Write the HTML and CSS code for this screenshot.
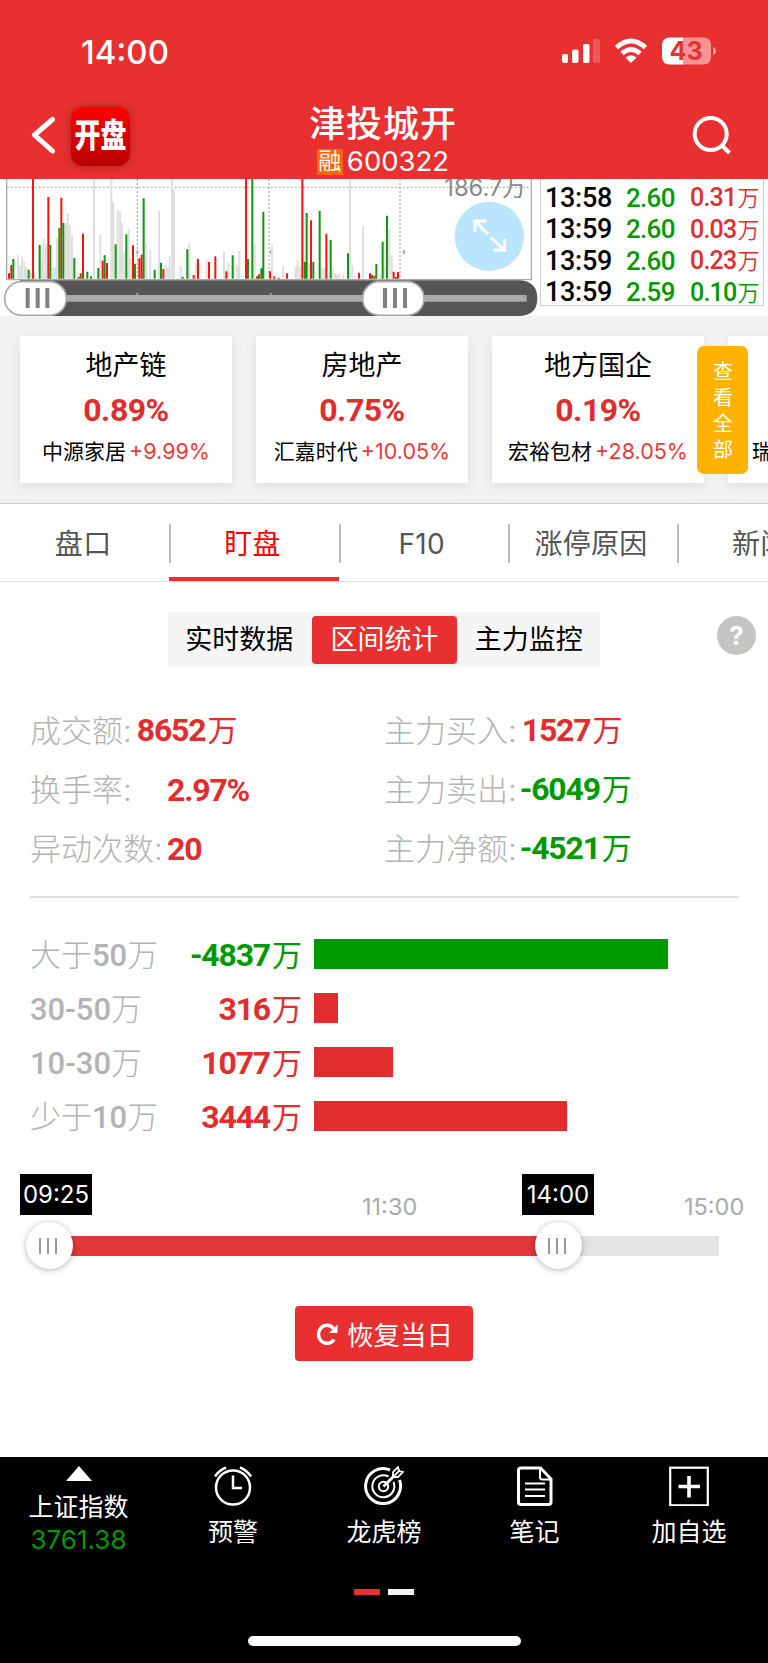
FILE: index.html
```html
<!DOCTYPE html>
<html lang="zh-CN">

<head>
  <meta charset="UTF-8">
  <meta name="viewport" content="width=device-width, initial-scale=1.0">
  <title>津投城开 600322</title>
  <link rel="stylesheet" href="styles.css">
</head>

<body>
  <div class="header">
    <div class="status-bar">
      <span class="clock">14:00</span>
      <svg class="status-icons" width="156" height="30" viewBox="0 0 156 30">
        <g fill="#fff">
          <rect x="2" y="18" width="6" height="9" rx="2" />
          <rect x="12" y="13.5" width="6.5" height="13.5" rx="2" />
          <rect x="23" y="8" width="6.5" height="19" rx="2" />
          <rect x="33" y="3" width="7" height="24" rx="2" opacity=".2" />
        </g>
        <g fill="none" stroke="#fff" stroke-width="5">
          <path d="M56.5 11.5Q71 -1.5 85.500 11.5" />
          <path d="M62 17.500Q71 9.500 80 17.500" />
        </g>
        <path d="M65.500 21.500Q71 17 76.500 21.500L71 27Z" fill="#fff" />
        <path d="M110 1.500H123V28.500H110Q102 28.500 102 20.500V9.500Q102 1.500 110 1.500Z" fill="#fff" />
        <path d="M123 1.500H143Q151 1.500 151 9.500V20.500Q151 28.500 143 28.500H123Z" fill="#f59696" />
        <path d="M153 11Q156 12 156 15T153 19Z" fill="#f59696" />
        <text class="battery-text" x="126" y="24" text-anchor="middle">43</text>
      </svg>
    </div>
    <div class="title-bar">
      <svg class="back" width="24" height="40" viewBox="0 0 24 40">
        <path d="M21.500 4.500L3.500 20L21.500 36" fill="none" stroke="#fff" stroke-width="5" stroke-linecap="round" stroke-linejoin="round" />
      </svg>
      <div class="app-icon"><span>开盘</span></div>
      <div class="stock">
        <h1>津投城开</h1>
        <div class="stock-code"><span class="margin-tag">融</span>600322</div>
      </div>
      <svg class="search" width="42" height="42" viewBox="0 0 42 42">
        <g fill="none" stroke="#fff" stroke-width="4">
          <circle cx="19.700" cy="19" r="16" />
          <path d="M31 30.500L38.500 38" />
        </g>
      </svg>
    </div>
  </div>

  <div class="quote">
    <!-- viewBox is three units to the pixel -->
    <svg class="chart" width="540" height="137" viewBox="0 12 1620 411">
      <g fill="none" stroke="#999" stroke-width="3" stroke-dasharray="6 6">
        <path d="M20 37H1590" />
        <path d="M412 12V313M807 12V313M1200 12V313" />
      </g>
      <path d="M412 226V238M812 226V238M1212 226V238" stroke="#aaa" stroke-width="6" />
      <path class="vol gray" d="M54 311V239M60 311V270M66 311V247M73 311V260M79 311V276M93 311V292M105 311V300M125 311V250M131 311V192M138 311V208M158 311V277M165 311V277M171 311V187M197 311V144M203 311V114M209 311V150M216 311V180M282 311V12M301 311V179M334 311V12M340 311V80M353 311V106M360 311V112M366 311V143M373 311V233M386 311V162M392 311V250M438 311V205M451 311V225M477 311V108M496 311V270M503 311V277M509 311V244M516 311V12M522 311V42M542 311V273M568 311V204M588 311V262M620 311V254M672 311V229M685 311V262M712 311V271M718 311V228M764 311V208M816 311V210M849 311V273M887 311V275M893 311V254M900 311V275M927 311V265M966 311V278M973 311V280M998 311V278M1005 311V295M1011 311V299M1018 311V297M1030 311V299M1050 311V12M1057 311V270M1064 311V303M1089 311V153M1141 311V296M1154 311V273M1168 311V162M1175 311V239" />
      <path class="vol red" d="M27 311V295M34 311V270M99 311V12M145 311V66M184 311V68M236 311V305M249 311V176M308 311V257M321 311V264M399 311V211M418 311V250M425 311V239M490 311V282M581 311V300M594 311V252M627 311V261M646 311V244M679 311V289M738 311V12M777 311V298M810 311V289M823 311V304M861 311V295M907 311V12M933 311V136M979 311V176M1077 311V293M1110 311V295M1123 311V302M1181 311V290M1194 311V291" />
      <path class="vol green" d="M40 311V252M86 311V284M119 311V210M151 311V210M178 311V159M190 311V144M223 311V249M242 311V295M262 311V290M273 311V304M295 311V279M314 311V241M347 311V208M379 311V178M405 311V266M431 311V70M464 311V284M483 311V263M548 311V305M562 311V223M698 311V241M744 311V252M757 311V12M771 311V304M784 311V280M790 311V110M836 311V308M914 311V260M920 311V114M940 311V260M959 311V108M992 311V195M1044 311V235M1116 311V299M1129 311V267M1148 311V200M1161 311V122M1188 311V306" />
      <path d="M20 12V314H1594V12" fill="none" stroke="#aaa" stroke-width="4" />
      <text class="chart-max" x="1578" y="63" text-anchor="end">186.7万</text>
      <circle cx="1468" cy="184" r="104" fill="#bbe4ff" />
      <g fill="none" stroke="#fff" stroke-width="9">
        <path d="M1425 171V138H1460M1426 139L1464 178M1514 192V226H1480M1513 225L1472 187" />
      </g>

      <path d="M60 316H1560Q1612 320 1612 370T1560 423H60Z" fill="#555" />
      <path d="M100 370H1580" stroke="#aaa" stroke-width="20" />
      <path d="M412 353V362M812 353V362" stroke="#aaa" stroke-width="5" />
      <g fill="#fff" stroke="#aaa" stroke-width="5">
        <rect x="14" y="320" width="185" height="101" rx="50" />
        <rect x="1088" y="320" width="184" height="101" rx="50" />
      </g>
      <path d="M83 339V399M113 339V399M142 339V399M1155 339V399M1185 339V399M1215 339V399" stroke="#808080" stroke-width="12" />
    </svg>
    <div class="trades">
      <div class="trade"><span>13:58</span><span class="down">2.60</span><span class="amount up">0.31<i>万</i></span></div>
      <div class="trade"><span>13:59</span><span class="down">2.60</span><span class="amount up">0.03<i>万</i></span></div>
      <div class="trade"><span>13:59</span><span class="down">2.60</span><span class="amount up">0.23<i>万</i></span></div>
      <div class="trade"><span>13:59</span><span class="down">2.59</span><span class="amount down">0.10<i>万</i></span></div>
    </div>
  </div>

  <div class="sectors">
    <div class="card">
      <div class="card-name">地产链</div>
      <div class="card-rate">0.89%</div>
      <div class="card-lead">中源家居<span>+9.99%</span></div>
    </div>
    <div class="card">
      <div class="card-name">房地产</div>
      <div class="card-rate">0.75%</div>
      <div class="card-lead">汇嘉时代<span>+10.05%</span></div>
    </div>
    <div class="card">
      <div class="card-name">地方国企</div>
      <div class="card-rate">0.19%</div>
      <div class="card-lead">宏裕包材<span>+28.05%</span></div>
    </div>
    <div class="card card-cut">
      <div class="card-lead">瑞</div>
    </div>
    <div class="view-all">查看全部</div>
  </div>

  <div class="tabs">
    <div class="tab">盘口</div>
    <div class="tab active">盯盘</div>
    <div class="tab">F10</div>
    <div class="tab">涨停原因</div>
    <div class="tab">新闻</div>
  </div>

  <div class="panel">
    <div class="switch-row">
      <div class="switch">
        <span>实时数据</span>
        <span class="on">区间统计</span>
        <span>主力监控</span>
      </div>
      <div class="help">?</div>
    </div>

    <div class="stats">
      <div class="stat"><label>成交额:</label><b class="up">8652<i>万</i></b></div>
      <div class="stat"><label>主力买入:</label><b class="up">1527<i>万</i></b></div>
      <div class="stat"><label class="wide">换手率:</label><b class="up">2.97%</b></div>
      <div class="stat"><label>主力卖出:</label><b class="down">-6049<i>万</i></b></div>
      <div class="stat"><label class="wide">异动次数:</label><b class="up">20</b></div>
      <div class="stat"><label>主力净额:</label><b class="down">-4521<i>万</i></b></div>
    </div>

    <div class="flows">
      <div class="flow"><label>大于<em>50</em>万</label><b class="down">-4837<i>万</i></b><div class="bar bar-down" style="width: 354px"></div></div>
      <div class="flow"><label><em>30-50</em>万</label><b class="up">316<i>万</i></b><div class="bar" style="width: 23.5px"></div></div>
      <div class="flow"><label><em>10-30</em>万</label><b class="up">1077<i>万</i></b><div class="bar" style="width: 79px"></div></div>
      <div class="flow"><label>少于<em>10</em>万</label><b class="up">3444<i>万</i></b><div class="bar" style="width: 253px"></div></div>
    </div>

    <div class="range-labels">
      <span class="tip">09:25</span>
      <span class="mark">11:30</span>
      <span class="tip">14:00</span>
      <span class="mark">15:00</span>
    </div>
    <div class="range">
      <div class="thumb"><u></u><u></u><u></u></div>
      <div class="range-on"></div>
      <div class="thumb"><u></u><u></u><u></u></div>
      <div class="range-off"></div>
    </div>

    <button class="reset">
      <svg width="22" height="22" viewBox="0 0 22 22">
        <path d="M18 16.500A8.500 9 0 1 1 17.500 5.500" fill="none" stroke="#fff" stroke-width="3.500" />
        <path d="M21.500 1.500V10H13Z" fill="#fff" />
      </svg>
      恢复当日
    </button>
  </div>

  <div class="footer">
    <div class="nav">
      <div class="nav-item index">
        <svg width="26" height="15" viewBox="0 0 26 15"><path d="M13 0L26 15H0Z" fill="#fff" /></svg>
        <span>上证指数</span>
        <span class="index-value">3761.38</span>
      </div>
      <div class="nav-item">
        <svg width="40" height="40" viewBox="0 0 40 40" fill="none" stroke="#fff" stroke-width="2.500">
          <circle cx="20" cy="21.500" r="17" />
          <path d="M20 9.500V22H29" />
          <path d="M2 10.500Q6 4.500 13 1.500M38 10.500Q34 4.500 27 1.500" />
        </svg>
        <span>预警</span>
      </div>
      <div class="nav-item">
        <svg width="40" height="40" viewBox="0 0 40 40" fill="none" stroke="#fff">
          <path d="M26 4A17.500 17.500 0 1 0 35.500 14" stroke-width="3" />
          <path d="M24.500 10.500A11 11 0 1 0 29.500 16" stroke-width="2" />
          <circle cx="19.500" cy="20.500" r="4.700" stroke-width="2" />
          <path d="M19.500 20.500L31 9" stroke-width="3" />
          <path d="M29 11V6L34 1L35 5L39 6L34 11ZM31 9L36 4" stroke-width="1.800" />
        </svg>
        <span>龙虎榜</span>
      </div>
      <div class="nav-item">
        <svg width="40" height="40" viewBox="0 0 40 40" fill="none" stroke="#fff">
          <path d="M6 2H25.500L36 13V36Q36 38.500 33.500 38.500H6Q3.500 38.500 3.500 36V4.500Q3.500 2 6 2Z" stroke-width="3" />
          <path d="M25 2V11Q25 13.500 27.500 13.500H36" stroke-width="2" />
          <path d="M10 17.500H30M10 23.500H30M10 30H30" stroke-width="2" />
        </svg>
        <span>笔记</span>
      </div>
      <div class="nav-item">
        <svg width="40" height="40" viewBox="0 0 40 40" fill="none" stroke="#fff">
          <rect x="1.200" y="1.700" width="37.600" height="37.600" stroke-width="2.200" />
          <path d="M20 10V31.500M9.500 20.500H31" stroke-width="3.600" />
        </svg>
        <span>加自选</span>
      </div>
    </div>
    <div class="pager"><span class="current"></span><span></span></div>
    <div class="home-bar"></div>
  </div>
</body>

</html>
```

FILE: styles.css
```css
* {
  box-sizing: border-box;
}

body {
  margin: 0;
  width: 768px;
  height: 1663px;
  overflow: hidden;
  background: #fff;
  color: #000;
  font-family: Inter, "Noto Sans CJK SC", sans-serif;
}

i,
em {
  font-style: normal;
}

.up {
  color: #e12d2d;
}

.down {
  color: #090;
}

/* header */
.header {
  height: 179px;
  background: #e83030;
  color: #fff;
}

.status-bar {
  display: flex;
  justify-content: space-between;
  height: 100px;
  padding: 36px 52px 0 81px;
}

.clock {
  font-size: 33px;
  font-weight: 500;
  line-height: 32px;
}

.battery-text {
  fill: #e83030;
  font-size: 25px;
  font-weight: 700;
}

.title-bar {
  display: flex;
  align-items: flex-start;
  height: 79px;
  padding-left: 31px;
}

.back {
  margin-top: 15px;
}

.app-icon {
  width: 59px;
  height: 59px;
  margin: 7px 0 0 16px;
  border-radius: 12px;
  background: linear-gradient(#f00, #b80000);
  box-shadow: 0 0 8px rgba(0, 0, 0, .3);
  text-align: center;
}

.app-icon span {
  display: block;
  font-size: 26px;
  font-weight: 900;
  line-height: 58px;
  transform: scaleY(1.27);
}

.stock {
  width: 200px;
  margin-left: 153px;
  text-align: center;
}

.stock h1 {
  margin: 0;
  padding-top: 2px;
  font-size: 36px;
  font-weight: 500;
  letter-spacing: .9px;
  line-height: 44px;
}

.stock-code {
  display: flex;
  justify-content: center;
  align-items: center;
  gap: 4px;
  margin-top: 2px;
  font-size: 27.500px;
  line-height: 27px;
}

.margin-tag {
  width: 26px;
  height: 26px;
  background: #f60;
  font-size: 23px;
  line-height: 24px;
}

.search {
  margin: 15px 0 0 208px;
}

/* volume chart and trades */
.quote {
  display: flex;
  height: 137px;
}

.vol {
  fill: none;
  stroke-width: 6;
}

.vol.gray {
  stroke: #dfdfdf;
}

.vol.red {
  stroke: #f11;
}

.vol.green {
  stroke: #119611;
}

.chart-max {
  fill: #888;
  font-size: 71px;
}

.trades {
  width: 224px;
  height: 127px;
  padding-top: 3px;
  border: 1px solid #ccc;
  border-top: 0;
}

.trade {
  display: grid;
  grid-template-columns: 81px 64px 1fr;
  padding-left: 4px;
  height: 31.500px;
  align-items: center;
  font-family: Roboto, "Noto Sans CJK SC", sans-serif;
  font-size: 27px;
  font-weight: 500;
  line-height: 31px;
  white-space: nowrap;
}

.trade > span:first-child {
  letter-spacing: -.3px;
}

.trade .down,
.trade .up {
  font-size: 26px;
  letter-spacing: -.7px;
}

.trade .amount {
  font-size: 25px;
  letter-spacing: -.8px;
}

.trade i {
  margin-left: 1px;
  font-size: 22px;
  font-weight: 350;
}

/* sectors */
.sectors {
  position: relative;
  display: flex;
  gap: 24px;
  height: 188px;
  padding: 20px 0 0 20px;
  overflow: hidden;
  background: #f2f2f2;
  border-bottom: 1px solid #d0d0d0;
}

.card {
  flex: none;
  width: 212px;
  height: 147px;
  background: #fff;
  box-shadow: 0 3px 12px rgba(0, 0, 0, .09);
  text-align: center;
  white-space: nowrap;
}

.card-name {
  margin-top: 10px;
  font-size: 27px;
  line-height: 40px;
}

.card-rate {
  margin-top: 5px;
  color: #e12d2d;
  font-family: Roboto, sans-serif;
  font-size: 32px;
  font-weight: 700;
  letter-spacing: -.5px;
  line-height: 38px;
}

.card-lead {
  margin-top: 7px;
  font-size: 21px;
  line-height: 30px;
}

.card-lead span {
  margin-left: 3px;
  color: #f03838;
  font-size: 21.500px;
}

.card-cut {
  padding: 94px 0 0 24px;
  text-align: left;
}

.view-all {
  position: absolute;
  left: 697px;
  top: 30px;
  width: 51px;
  height: 128px;
  padding: 13px 15px 11px 16px;
  border-radius: 7px;
  background: #ffb300;
  color: #fff;
  font-size: 20px;
  line-height: 26px;
}

/* tabs */
.tabs {
  display: flex;
  height: 78px;
  overflow: hidden;
  border-bottom: 1px solid #e0e0e0;
}

.tab {
  position: relative;
  flex: none;
  width: 169.300px;
  color: #555;
  font-size: 28px;
  letter-spacing: .3px;
  line-height: 81px;
  padding-right: 3px;
  text-align: center;
}

.tab + .tab::before {
  content: "";
  position: absolute;
  left: 0;
  top: 20px;
  width: 2px;
  height: 39px;
  background: #bbb;
}

.tab.active {
  height: 77px;
  border-bottom: 4px solid #e83030;
  color: #f00;
}

/* panel */
.panel {
  height: 875px;
  padding-top: 30px;
}

.switch-row {
  display: flex;
  padding-left: 168px;
}

.switch {
  display: flex;
  align-items: center;
  width: 432px;
  height: 55px;
  border-radius: 4px;
  background: #f5f5f5;
}

.switch span {
  width: 143px;
  font-size: 27px;
  line-height: 48px;
  text-align: center;
}

.switch .on {
  width: 146px;
  margin-left: 1px;
  border-radius: 4px;
  background: #e83030;
  color: #fff;
}

.help {
  width: 39px;
  height: 39px;
  margin: 4px 0 0 117px;
  border-radius: 50%;
  background: #c4c4c4;
  color: #fff;
  font-size: 26px;
  font-weight: 700;
  line-height: 40px;
  text-align: center;
}

.stats {
  display: grid;
  grid-template-columns: 354px 1fr;
  grid-auto-rows: 59px;
  margin: 34px 29px 0 30px;
  padding-bottom: 18px;
  border-bottom: 2px solid #e0e0e0;
}

.stat,
.flow {
  display: flex;
  align-items: center;
  color: #b3b3b3;
  font-size: 31px;
  line-height: 40px;
  white-space: nowrap;
}

.stat label,
.flow label {
  font-weight: 300;
}

.stat b,
.flow b {
  margin-left: 5px;
  font-family: Roboto, "Noto Sans CJK SC", sans-serif;
  font-size: 32px;
  font-weight: 700;
  letter-spacing: -1.200px;
}

.stat b.down {
  margin-left: 3px;
}

.stat i,
.flow i {
  margin-left: 2px;
  font-size: 30px;
  font-weight: 400;
  letter-spacing: 0;
}

.stat label.wide {
  width: 132px;
}

.flows {
  margin: 30px 0 0 30px;
}

.flow {
  height: 54px;
}

.flow label {
  width: 140px;
}

.flow label em {
  font-family: Roboto, sans-serif;
  font-weight: 500;
}

.flow b {
  width: 132px;
  margin: 0 12px 0 0;
  text-align: right;
}

.bar {
  height: 30px;
  margin-bottom: 2px;
  background: #e12d2d;
}

.bar-down {
  background: #090;
}

.range-labels {
  display: grid;
  grid-template-columns: 342px 160px 162px 1fr;
  height: 41px;
  margin: 30px 0 0 20px;
}

.tip {
  width: 72px;
  height: 41px;
  background: #000;
  color: #fff;
  font-size: 24px;
  line-height: 41px;
  text-align: center;
}

.mark {
  padding-top: 17px;
  color: #aaa;
  font-size: 23.500px;
  line-height: 32px;
}

.range {
  display: flex;
  align-items: center;
  height: 47px;
  margin: 7px 0 0 25.500px;
}

.range-on {
  width: 474px;
  height: 20px;
  margin: 0 -6px;
  background: #e33639;
}

.range-off {
  width: 142px;
  height: 20px;
  margin-left: -5px;
  background: #e4e4e4;
}

.thumb {
  z-index: 1;
  display: flex;
  justify-content: center;
  align-items: center;
  gap: 6px;
  width: 47px;
  height: 47px;
  padding-right: 2px;
  border-radius: 50%;
  background: #fff;
  box-shadow: 0 1px 6px rgba(0, 0, 0, .3);
}

.thumb u {
  width: 2px;
  height: 16px;
  background: #999;
}

.reset {
  display: flex;
  align-items: center;
  gap: 9px;
  width: 178px;
  height: 55px;
  margin: 37px 0 0 295px;
  padding: 0 0 0 21px;
  border: 0;
  border-radius: 4px;
  background: #e83030;
  color: #fff;
  font-family: inherit;
  font-size: 26.500px;
}

/* footer */
.footer {
  height: 206px;
  background: #000;
  color: #fff;
}

.nav {
  display: grid;
  grid-template-columns: 157px 152px 150px 151px 158px;
  height: 132px;
  padding-top: 9px;
}

.nav-item {
  display: flex;
  flex-direction: column;
  align-items: center;
  font-size: 25px;
  line-height: 32px;
}

.nav-item span {
  margin-top: 10px;
}

.nav-item .index-value {
  margin-top: 1px;
  color: #090;
  font-size: 26px;
}

.pager {
  display: flex;
  justify-content: center;
  gap: 8px;
}

.pager span {
  width: 26px;
  height: 6px;
  background: #f2f2f2;
}

.pager .current {
  background: #e83030;
}

.home-bar {
  width: 273px;
  height: 10px;
  margin: 41px auto 0;
  border-radius: 5px;
  background: #fff;
}
```
